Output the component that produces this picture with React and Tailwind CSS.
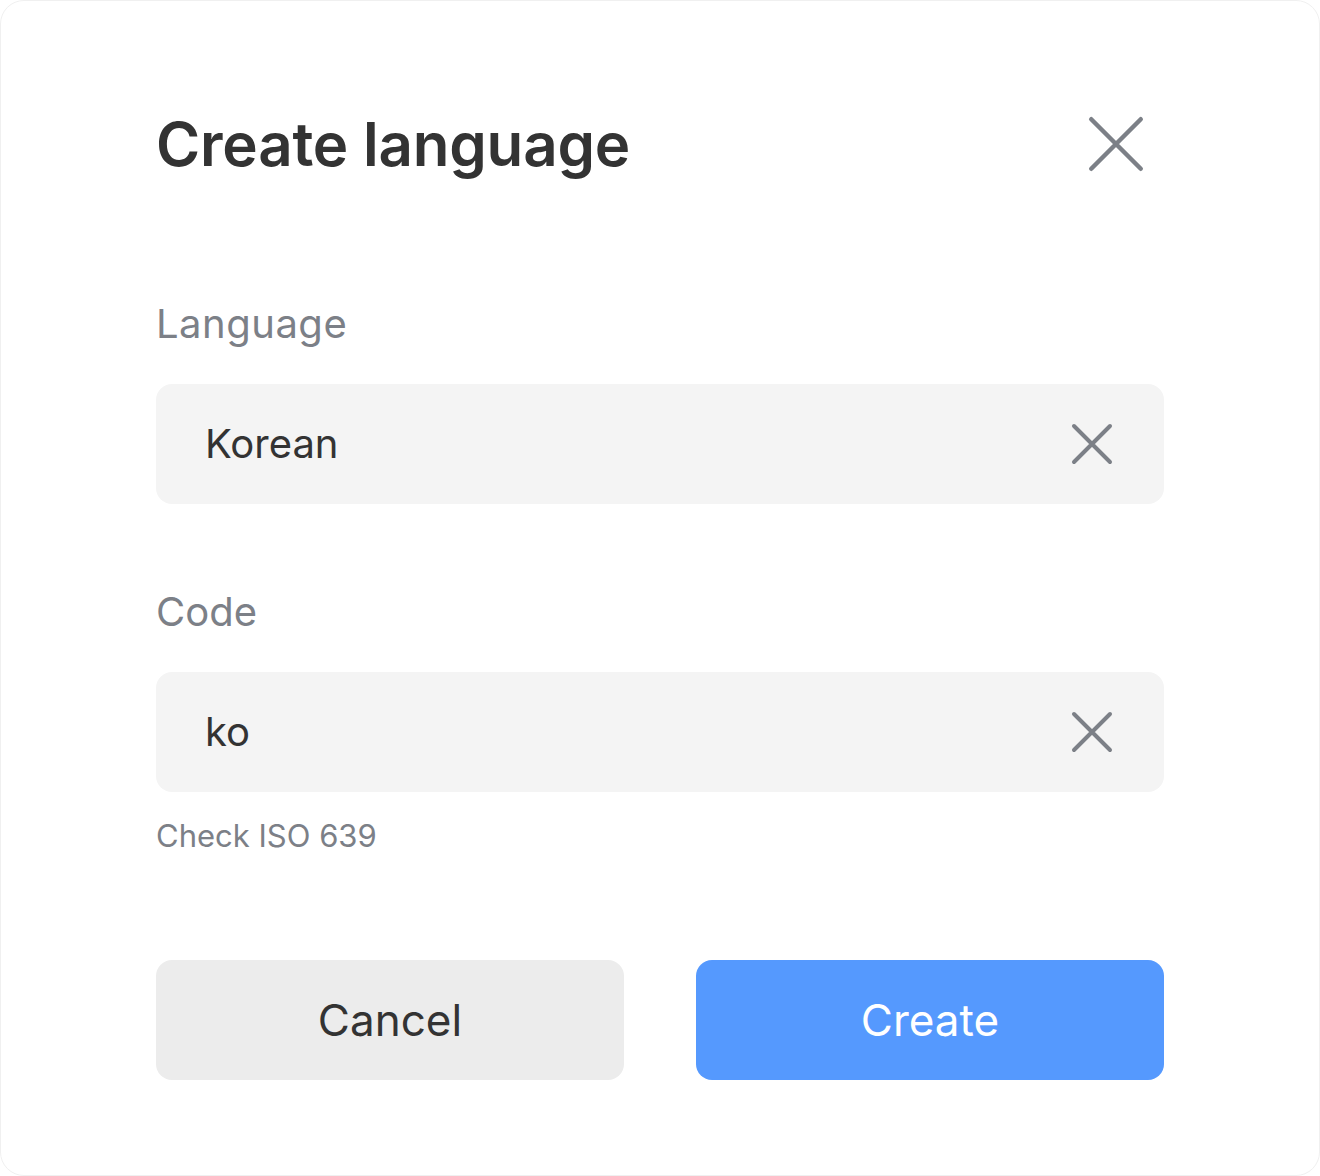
import React from "react";

function XIcon({ size, stroke = 4 }) {
  return (
    <svg width={size} height={size} viewBox={`0 0 ${size} ${size}`} fill="none">
      <path
        d={`M${stroke / 2 + 1} ${stroke / 2 + 1} L${size - stroke / 2 - 1} ${size - stroke / 2 - 1} M${size - stroke / 2 - 1} ${stroke / 2 + 1} L${stroke / 2 + 1} ${size - stroke / 2 - 1}`}
        stroke="#7c8087"
        strokeWidth={stroke}
        strokeLinecap="round"
      />
    </svg>
  );
}

function Field({ value }) {
  return (
    <div className="h-[120px] rounded-[16px] bg-[#f4f4f4] flex items-center justify-between pl-[49px] pr-[51px]">
      <span className="text-[40px] leading-[48px] text-[#333333]">{value}</span>
      <XIcon size={42} stroke={4} />
    </div>
  );
}

export default function App() {
  return (
    <div
      className="w-[1320px] h-[1176px] bg-white rounded-[24px] border border-[#f0f0f0] box-border px-[155px] pt-[107px] flex flex-col"
      style={{ fontFamily: "Inter, 'Noto Sans', sans-serif" }}
    >
      <div className="flex items-center justify-between h-[72px]">
        <h1 className="text-[60px] leading-[72px] font-semibold text-[#333333] tracking-[-0.2px]">Create language</h1>
        <div className="mr-[20px]">
          <XIcon size={56} stroke={4.5} />
        </div>
      </div>

      <div className="mt-[120px] text-[40px] leading-[48px] text-[#7c8087] tracking-[0.5px]">Language</div>
      <div className="mt-[36px]">
        <Field value="Korean" />
      </div>

      <div className="mt-[84px] text-[40px] leading-[48px] text-[#7c8087]">Code</div>
      <div className="mt-[36px]">
        <Field value="ko" />
      </div>

      <div className="mt-[24px] text-[31px] leading-[40px] text-[#7c8087]">Check ISO 639</div>

      <div className="mt-[104px] grid grid-cols-2 gap-[72px]">
        <button className="h-[120px] rounded-[16px] bg-[#ececec] text-[44px] text-[#333333]">Cancel</button>
        <button className="h-[120px] rounded-[16px] bg-[#5599fe] text-[44px] text-white">Create</button>
      </div>
    </div>
  );
}
